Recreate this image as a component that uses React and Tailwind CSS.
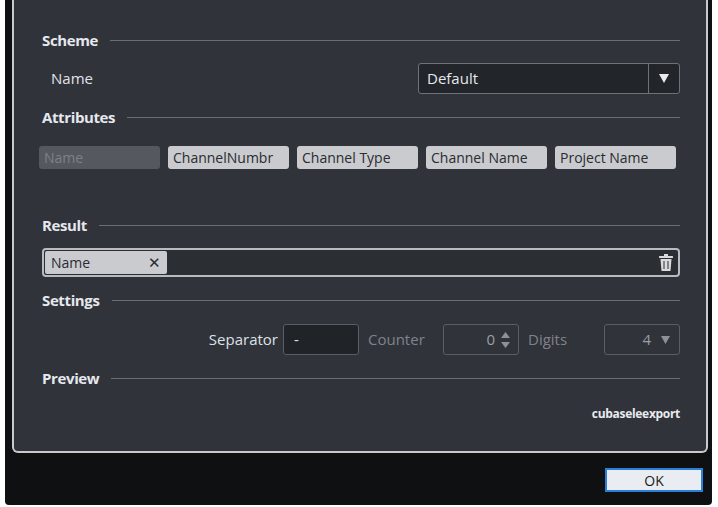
const font = { fontFamily: '"Open Sans", "Liberation Sans", sans-serif' }

function Section({ title, className = '' }) {
  return (
    <div className={`flex items-center gap-3 h-[20px] ${className}`}>
      <span className="text-[15px] font-bold text-[#e6e8ee] tracking-tight">{title}</span>
      <div className="flex-1 h-px bg-[#6a6e76]" />
    </div>
  )
}

function Chip({ label, dim, w }) {
  return (
    <div className={`h-[23px] rounded-[3px] px-[5px] flex items-center text-[14px] ${w} ${dim ? 'bg-[#55585e] text-[#7d8087]' : 'bg-[#c9cbcf] text-[#2a2c30]'}`}>
      {label}
    </div>
  )
}

export default function App() {
  return (
    <div style={font} className="w-[718px] h-[507px] bg-white">
      <div className="ml-[5px] w-[707px] h-[505px] bg-[#0f1011] rounded-b-[4px] flex flex-col">
        <div className="ml-[7px] w-[696px] h-[453px] bg-[#30333a] border-2 border-t-0 border-[#c8cacd] rounded-b-[6px] pl-[28px] pr-[26px] pt-[30px]">
          <Section title="Scheme" />
          <div className="flex items-center justify-between h-[31px] mt-[13px]">
            <span className="ml-[9px] text-[15px] text-[#e0e2e8]">Name</span>
            <div className="w-[262px] h-[31px] flex border border-[#6e727a] rounded-[3px] bg-[#22252a]">
              <div className="flex-1 px-[8px] flex items-center text-[15px] text-[#e6e8ec]">Default</div>
              <div className="w-[31px] border-l border-[#6e727a] flex items-center justify-center">
                <svg width="10" height="9" viewBox="0 0 10 9"><path d="M0 0h10L5 9z" fill="#e8eaee" /></svg>
              </div>
            </div>
          </div>
          <Section title="Attributes" className="mt-[13px]" />
          <div className="flex gap-[8px] mt-[19px] ml-[-3px]">
            <Chip label="Name" dim w="w-[121px]" />
            <Chip label="ChannelNumbr" w="w-[121px]" />
            <Chip label="Channel Type" w="w-[121px]" />
            <Chip label="Channel Name" w="w-[121px]" />
            <Chip label="Project Name" w="w-[121px]" />
          </div>
          <Section title="Result" className="mt-[46px]" />
          <div className="mt-[13px] h-[29px] border-2 border-[#b8bbc0] rounded-[4px] flex items-center pl-[1px] pr-[5px] bg-[#2b2e33]">
            <div className="w-[122px] h-[23px] bg-[#c9cbcf] rounded-[2px] flex items-center justify-between px-[6px] text-[14px] text-[#2a2c30]">
              <span>Name</span>
              <span className="text-[15px] leading-none">✕</span>
            </div>
            <div className="flex-1" />
            <svg width="14" height="17" viewBox="0 0 14 17" fill="#d8dade">
              <rect x="0" y="2" width="14" height="2" rx="0.5" />
              <rect x="5" y="0" width="4" height="2" />
              <path d="M1.5 5h11l-1 12h-9z" />
              <rect x="4.5" y="7" width="1" height="8" fill="#2b2e33" />
              <rect x="8.5" y="7" width="1" height="8" fill="#2b2e33" />
            </svg>
          </div>
          <Section title="Settings" className="mt-[13px]" />
          <div className="flex items-center justify-end h-[31px] mt-[14px] text-[15px]">
            <span className="text-[#dfe1e6] mr-[5px]">Separator</span>
            <div className="w-[76px] h-[31px] border border-[#595d64] rounded-[3px] bg-[#202328] px-[10px] flex items-center text-[#e0e2e6]">-</div>
            <span className="text-[#7f838a] ml-[9px] w-[75px]">Counter</span>
            <div className="w-[76px] h-[31px] border border-[#595d64] rounded-[3px] flex items-center justify-end pr-[8px] gap-[6px] text-[#9a9ea5]">
              <span>0</span>
              <svg width="9" height="16" viewBox="0 0 9 16" fill="#8d9198"><path d="M4.5 0L9 6H0z" /><path d="M0 10h9l-4.5 6z" /></svg>
            </div>
            <span className="text-[#7f838a] ml-[9px] w-[76px]">Digits</span>
            <div className="w-[76px] h-[31px] border border-[#595d64] rounded-[3px] flex items-center justify-end pr-[9px] gap-[10px] text-[#9a9ea5]">
              <span>4</span>
              <svg width="9" height="8" viewBox="0 0 9 8" fill="#8d9198"><path d="M0 0h9L4.5 8z" /></svg>
            </div>
          </div>
          <Section title="Preview" className="mt-[13px]" />
          <div className="mt-[17px] text-right text-[12px] font-bold text-[#e8eaee] tracking-tight">cubaseleexport</div>
        </div>
        <div className="flex justify-end pr-[9px] pt-[15px]">
          <div className="w-[98px] h-[24px] bg-[#e9ecf0] border-2 border-[#2a7fd6] flex items-center justify-center text-[14px] text-[#1a1a1a]">OK</div>
        </div>
      </div>
    </div>
  )
}
